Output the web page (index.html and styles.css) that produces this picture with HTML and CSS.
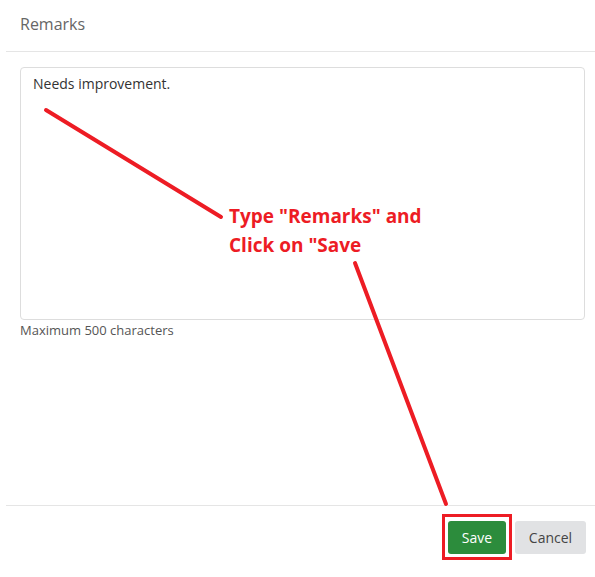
FILE: index.html
```html
<!DOCTYPE html>
<html>
<head>
    <title>Remarks</title>
    <link rel="stylesheet" href="styles.css">
</head>
<body>
    <div class="modal">
        <div class="modal-header">
            <h4 class="modal-title">Remarks</h4>
        </div>
        <div class="modal-body">
            <textarea class="remarks" maxlength="500">Needs improvement.</textarea>
            <small class="help">Maximum 500 characters</small>
        </div>
        <div class="modal-footer">
            <button class="btn btn-save">Save</button>
            <button class="btn btn-cancel">Cancel</button>
        </div>

        <!-- annotation drawn over the screenshot -->
        <svg class="annotation" width="595" height="577" viewBox="0 0 595 577">
            <line x1="46" y1="110" x2="221" y2="217" stroke="#ed1c24" stroke-width="4" stroke-linecap="round"/>
            <line x1="355" y1="263" x2="446" y2="504" stroke="#ed1c24" stroke-width="4" stroke-linecap="round"/>
            <rect x="443.5" y="515.5" width="67" height="43" fill="none" stroke="#ed1c24" stroke-width="3"/>
        </svg>
        <div class="note">Type "Remarks" and<br>Click on "Save</div>
    </div>
</body>
</html>
```

FILE: styles.css
```css
body {
    margin: 0;
    font-family: "Open Sans", Arial, sans-serif;
    background: #fff;
}
.modal {
    position: relative;
    width: 595px;
    height: 577px;
    display: flex;
    flex-direction: column;
}
.modal-header {
    margin-left: 6px;
    height: 51px;
    padding-left: 14px;
    border-bottom: 1px solid #e5e5e5;
    display: flex;
    align-items: center;
}
.modal-title {
    margin: 0 0 4px 0;
    font-size: 16px;
    font-weight: 400;
    color: #666;
}
.modal-body {
    flex: 1;
    padding: 15px 10px 0 20px;
}
.remarks {
    display: block;
    width: 565px;
    height: 253px;
    box-sizing: border-box;
    padding: 6px 12px;
    border: 1px solid #ddd;
    border-radius: 4px;
    font-family: "Open Sans", Arial, sans-serif;
    font-size: 14px;
    color: #333;
    resize: none;
}
.help {
    display: block;
    margin-top: 1px;
    font-size: 13px;
    color: #555;
}
.modal-footer {
    margin-left: 6px;
    height: 72px;
    border-top: 1px solid #e5e5e5;
    display: flex;
    justify-content: flex-end;
    align-items: flex-start;
    gap: 9px;
    padding: 15px 9px 0 0;
    box-sizing: border-box;
}
.btn {
    height: 33px;
    padding: 0 13px;
    border: none;
    border-radius: 3px;
    font-family: "Open Sans", Arial, sans-serif;
    font-size: 14px;
    cursor: pointer;
}
.btn-save {
    background: #2c8c3c;
    color: #fff;
    width: 58px;
}
.btn-cancel {
    background: #e1e2e4;
    color: #444;
    width: 71px;
}
.annotation {
    position: absolute;
    left: 0;
    top: 0;
    pointer-events: none;
}
.note {
    position: absolute;
    left: 229px;
    top: 202px;
    font-family: "Open Sans", Arial, sans-serif;
    font-weight: 700;
    font-size: 19px;
    line-height: 29px;
    color: #ed1c24;
}
```
